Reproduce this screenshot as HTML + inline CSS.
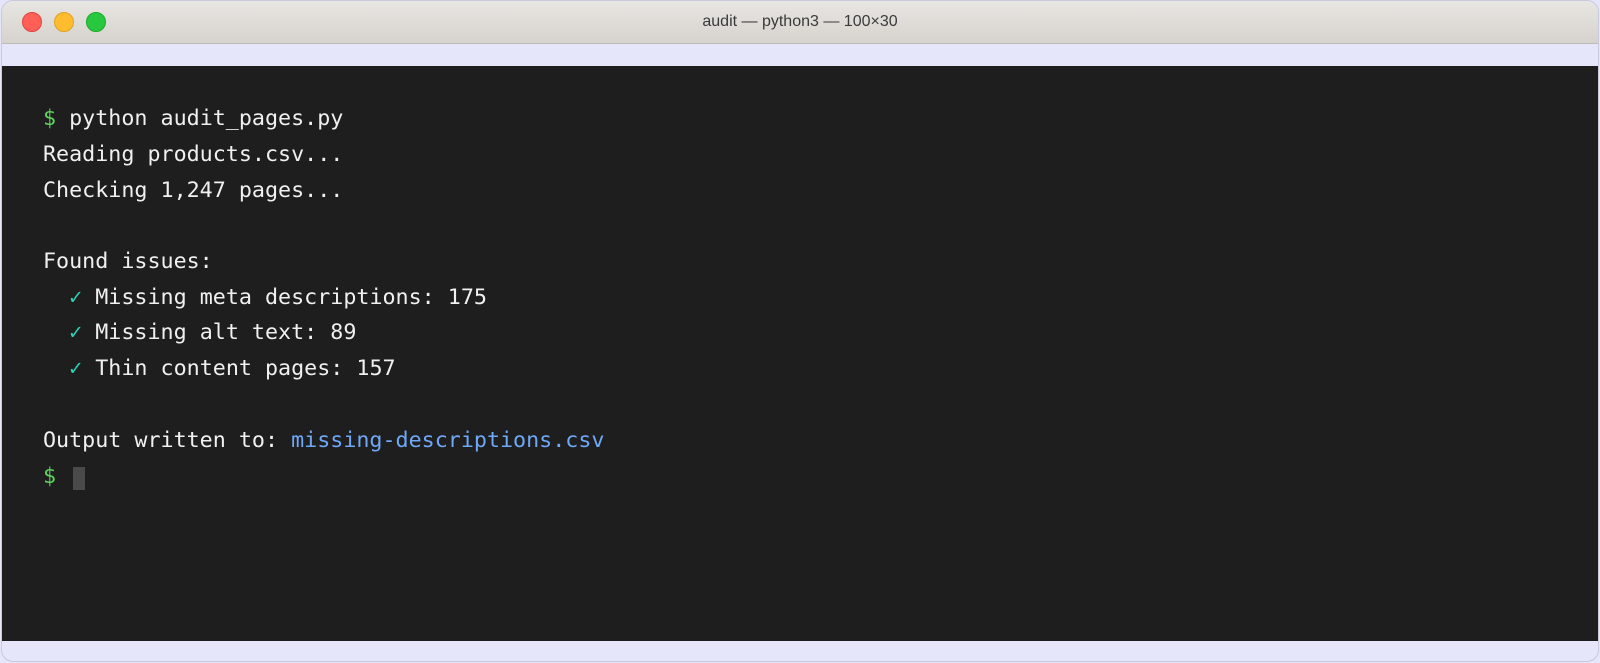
<!DOCTYPE html>
<html><head><meta charset="utf-8"><style>
html,body{margin:0;padding:0;width:1600px;height:663px;background:#e6e6fa;overflow:hidden}
.win{position:absolute;left:1px;top:0;width:1598px;height:662px;border:1px solid #c9c9dc;border-radius:12px;background:#e6e6fa;overflow:hidden;box-sizing:border-box}
.title{position:absolute;left:0;top:0;right:0;height:42px;background:linear-gradient(#e8e6e2,#d6d3ce);border-bottom:1px solid #bdbab5}
.dot{position:absolute;top:11px;width:20px;height:20px;border-radius:50%;box-sizing:border-box}
.t{position:absolute;left:0;right:0;top:12px;text-align:center;font:16px "Liberation Sans",sans-serif;color:#3a3a3a}
.term{position:absolute;left:0;right:0;top:65px;height:575px;background:#1e1e1e}
.l{position:absolute;left:41px;font:21.7px/1 "DejaVu Sans Mono","Liberation Mono",monospace;color:#f0f0f0;white-space:pre}
.g{color:#5fd45f}.c{color:#2ed3b4}.b{color:#6ea8f7}
.cur{position:absolute;left:71px;top:401px;width:12px;height:23px;background:#4a4a4a}
</style></head><body>
<div class="win">
<div class="title">
<div class="dot" style="left:20px;background:#fe5f57;border:1px solid #e0443e"></div>
<div class="dot" style="left:52px;background:#febc2e;border:1px solid #dea123"></div>
<div class="dot" style="left:84px;background:#28c840;border:1px solid #1aab29"></div>
<div class="t">audit — python3 — 100×30</div>
</div>
<div class="term">
<div class="l" style="top:42px"><span class="g">$</span> python audit_pages.py</div>
<div class="l" style="top:78px">Reading products.csv...</div>
<div class="l" style="top:114px">Checking 1,247 pages...</div>
<div class="l" style="top:185px">Found issues:</div>
<div class="l" style="top:221px">  <span class="c">✓</span> Missing meta descriptions: 175</div>
<div class="l" style="top:256px">  <span class="c">✓</span> Missing alt text: 89</div>
<div class="l" style="top:292px">  <span class="c">✓</span> Thin content pages: 157</div>
<div class="l" style="top:364px">Output written to: <span class="b">missing-descriptions.csv</span></div>
<div class="l" style="top:400px"><span class="g">$</span></div>
<div class="cur"></div>
</div>
</div>
</body></html>
